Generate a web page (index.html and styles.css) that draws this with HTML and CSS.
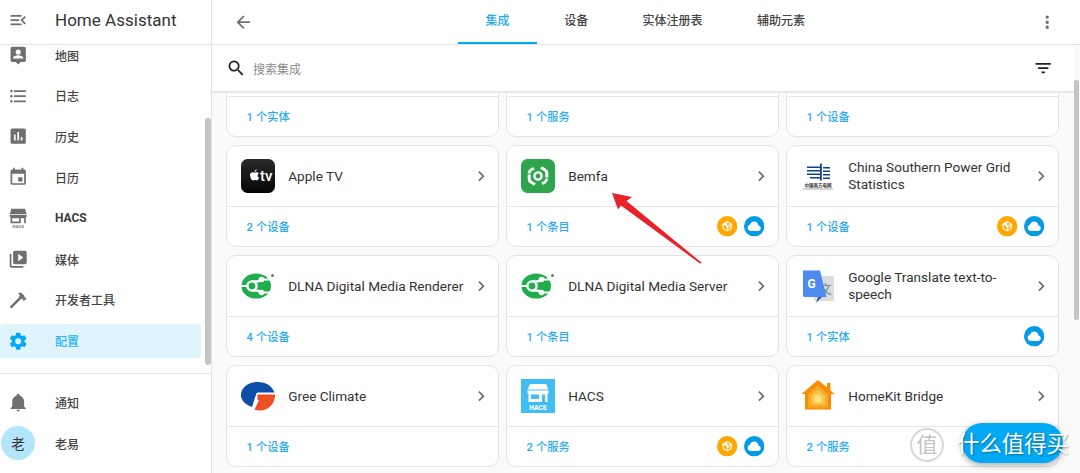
FILE: index.html
```html
<!DOCTYPE html>
<html lang="zh">
<head>
<meta charset="utf-8">
<title>Home Assistant</title>
<link rel="stylesheet" href="styles.css">
</head>
<body>
<svg class="defs" aria-hidden="true">
  <symbol id="chev" viewBox="0 0 24 24"><path d="M8.59,16.58L13.17,12L8.59,7.41L10,6L16,12L10,18L8.59,16.58Z"/></symbol>
  <symbol id="pkg" viewBox="0 0 24 24"><circle cx="12" cy="12" r="12" fill="#ffa600"/><g transform="translate(4.8 4.8) scale(.6)"><path fill="#fff" d="M2,10.96C1.5,10.68 1.35,10.07 1.63,9.59L3.13,7C3.24,6.8 3.41,6.66 3.6,6.58L11.43,2.18C11.59,2.06 11.79,2 12,2C12.21,2 12.41,2.06 12.57,2.18L20.47,6.62C20.66,6.72 20.82,6.88 20.91,7.08L22.36,9.6C22.64,10.08 22.47,10.69 22,10.96L21,11.54V16.5C21,16.88 20.79,17.21 20.47,17.38L12.57,21.82C12.41,21.94 12.21,22 12,22C11.79,22 11.59,21.94 11.43,21.82L3.53,17.38C3.21,17.21 3,16.88 3,16.5V10.96C2.7,11.13 2.32,11.14 2,10.96M12,4.15V4.15L12,10.85V10.85L17.96,7.5L12,4.15M5,15.91L11,19.29V12.58L5,9.21V15.91M19,15.91V12.69L14,15.59C13.67,15.77 13.3,15.76 13,15.6V19.29L19,15.91M13.85,13.36L20.13,9.73L19.55,8.72L13.27,12.35L13.85,13.36Z"/></g></symbol>
  <symbol id="cloud" viewBox="0 0 24 24"><circle cx="12" cy="12" r="12" fill="#039be5"/><g transform="translate(3.6 3.6) scale(.7)"><path fill="#fff" d="M6.5 20Q4.22 20 2.61 18.43 1 16.85 1 14.58 1 12.63 2.17 11.1 3.35 9.57 5.25 9.15 5.88 6.85 7.75 5.43 9.63 4 12 4 14.93 4 16.96 6.04 19 8.07 19 11 20.73 11.2 21.86 12.5 23 13.78 23 15.5 23 17.38 21.69 18.69 20.38 20 18.5 20Z"/></g></symbol>
  <symbol id="dlna" viewBox="0 0 34 34"><ellipse cx="15.2" cy="17" rx="14.8" ry="12.6" fill="#1fae4b"/><circle cx="11" cy="17" r="4.600" fill="none" stroke="#fff" stroke-width="2.400"/><path d="M11 12.400H18M11 21.600H18M20 10.500H30M20 23.500H30M0 17H6" stroke="#fff" stroke-width="2.200" fill="none"/><path d="M17 12.400L20 10.500M17 21.600L20 23.500" stroke="#fff" stroke-width="2.200"/><circle cx="20.500" cy="10.500" r="2.800" fill="#fff"/><circle cx="20.500" cy="23.500" r="2.800" fill="#fff"/><circle cx="31.500" cy="6.500" r="1.500" fill="#777"/></symbol>
</svg>

<div class="app">
  <aside class="sidebar">
    <header class="side-head">
      <svg class="ico" viewBox="0 0 24 24"><path d="M21,15.61L19.59,17L14.58,12L19.59,7L21,8.39L17.44,12L21,15.61M3,6H16V8H3V6M3,13V11H13V13H3M3,18V16H16V18H3Z"/></svg>
      <span class="brand">Home Assistant</span>
    </header>
    <div class="side-clip">
      <nav class="nav">
        <a class="item"><svg class="ico" viewBox="0 0 24 24"><path d="M19 2H5a2 2 0 0 0-2 2v14a2 2 0 0 0 2 2h4l3 3 3-3h4a2 2 0 0 0 2-2V4a2 2 0 0 0-2-2m-7 3.3a3 3 0 1 1 0 6 3 3 0 0 1 0-6M18 16H6v-.9c0-2 4-3.1 6-3.1s6 1.1 6 3.1z"/></svg><span>地图</span></a>
        <a class="item"><svg class="ico" viewBox="0 0 24 24"><path d="M7,5H21V7H7V5M7,13V11H21V13H7M4,4.5A1.5,1.5 0 0,1 5.5,6A1.5,1.5 0 0,1 4,7.5A1.5,1.5 0 0,1 2.5,6A1.5,1.5 0 0,1 4,4.5M4,10.5A1.5,1.5 0 0,1 5.5,12A1.5,1.5 0 0,1 4,13.5A1.5,1.5 0 0,1 2.5,12A1.5,1.5 0 0,1 4,10.5M7,19V17H21V19H7M4,16.5A1.5,1.5 0 0,1 5.5,18A1.5,1.5 0 0,1 4,19.5A1.5,1.5 0 0,1 2.5,18A1.5,1.5 0 0,1 4,16.5Z"/></svg><span>日志</span></a>
        <a class="item"><svg class="ico" viewBox="0 0 24 24"><path d="M9 17H7V10H9V17M13 17H11V7H13V17M17 17H15V13H17V17M19 3H5C3.9 3 3 3.9 3 5V19C3 20.1 3.9 21 5 21H19C20.1 21 21 20.1 21 19V5C21 3.9 20.1 3 19 3Z"/></svg><span>历史</span></a>
        <a class="item"><svg class="ico" viewBox="0 0 24 24"><path d="M19,19H5V8H19M16,1V3H8V1H6V3H5C3.89,3 3,3.89 3,5V19A2,2 0 0,0 5,21H19A2,2 0 0,0 21,19V5C21,3.89 20.1,3 19,3H18V1M17,12H12V17H17V12Z"/></svg><span>日历</span></a>
        <a class="item"><svg class="ico" viewBox="0 0 24 24"><path d="M4 1h16l2 6H2zM2 8h20v2l-1 1v7H3v-7l-1-1zM5 12v4h8v-4zM15 12v6h4v-6z"/><text class="hacs-mini" x="12" y="23.500" text-anchor="middle">HACS</text></svg><strong>HACS</strong></a>
        <a class="item"><svg class="ico" viewBox="0 0 24 24"><path d="M4,6H2V20A2,2 0 0,0 4,22H18V20H4V6M20,2H8A2,2 0 0,0 6,4V16A2,2 0 0,0 8,18H20A2,2 0 0,0 22,16V4A2,2 0 0,0 20,2M12,14.5V5.5L18,10L12,14.5Z"/></svg><span>媒体</span></a>
        <a class="item"><svg class="ico" viewBox="0 0 24 24"><path d="M2 19.63L13.43 8.2L12.72 7.5L14.14 6.07L12 3.89C13.2 2.7 15.09 2.7 16.27 3.89L19.87 7.5L18.45 8.91H21.29L22 9.62L18.45 13.21L17.74 12.5V9.62L16.27 11.04L15.56 10.33L4.13 21.76L2 19.63Z"/></svg><span>开发者工具</span></a>
        <a class="item active"><svg class="ico" viewBox="0 0 24 24"><path d="M12,15.5A3.5,3.5 0 0,1 8.5,12A3.5,3.5 0 0,1 12,8.5A3.5,3.5 0 0,1 15.5,12A3.5,3.5 0 0,1 12,15.5M19.43,12.97C19.47,12.65 19.5,12.33 19.5,12C19.5,11.67 19.47,11.34 19.43,11L21.54,9.37C21.73,9.22 21.78,8.95 21.66,8.73L19.66,5.27C19.54,5.05 19.27,4.96 19.05,5.05L16.56,6.05C16.04,5.66 15.5,5.32 14.87,5.07L14.5,2.42C14.46,2.18 14.25,2 14,2H10C9.75,2 9.54,2.18 9.5,2.42L9.13,5.07C8.5,5.32 7.96,5.66 7.44,6.05L4.95,5.05C4.73,4.96 4.46,5.05 4.34,5.27L2.34,8.73C2.21,8.95 2.27,9.22 2.46,9.37L4.57,11C4.53,11.34 4.5,11.67 4.5,12C4.5,12.33 4.53,12.65 4.57,12.97L2.46,14.63C2.27,14.78 2.21,15.05 2.34,15.27L4.34,18.73C4.46,18.95 4.73,19.03 4.95,18.95L7.44,17.94C7.96,18.34 8.5,18.68 9.13,18.93L9.5,21.58C9.54,21.82 9.75,22 10,22H14C14.25,22 14.46,21.82 14.5,21.58L14.87,18.93C15.5,18.67 16.04,18.34 16.56,17.94L19.05,18.95C19.27,19.03 19.54,18.95 19.66,18.73L21.66,15.27C21.78,15.05 21.73,14.78 21.54,14.63L19.43,12.97Z"/></svg><span>配置</span></a>
      </nav>
      <div class="side-bar"></div>
    </div>
    <div class="side-foot">
      <a class="item"><svg class="ico" viewBox="0 0 24 24"><path d="M21,19V20H3V19L5,17V11C5,7.9 7.03,5.17 10,4.29C10,4.19 10,4.1 10,4A2,2 0 0,1 12,2A2,2 0 0,1 14,4C14,4.1 14,4.19 14,4.29C16.97,5.17 19,7.9 19,11V17L21,19M14,21A2,2 0 0,1 12,23A2,2 0 0,1 10,21"/></svg><span>通知</span></a>
      <a class="item user"><span class="avatar">老</span><span>老易</span></a>
    </div>
  </aside>

  <main class="main">
    <header class="topbar">
      <svg class="ico back" viewBox="0 0 24 24"><path d="M20,11V13H8L13.5,18.5L12.08,19.92L4.16,12L12.08,4.08L13.5,5.5L8,11H20Z"/></svg>
      <div class="tabs">
        <a class="tab on">集成</a><a class="tab">设备</a><a class="tab">实体注册表</a><a class="tab">辅助元素</a>
      </div>
      <svg class="ico dots" viewBox="0 0 24 24"><path d="M12,16A2,2 0 0,1 14,18A2,2 0 0,1 12,20A2,2 0 0,1 10,18A2,2 0 0,1 12,16M12,10A2,2 0 0,1 14,12A2,2 0 0,1 12,14A2,2 0 0,1 10,12A2,2 0 0,1 12,10M12,4A2,2 0 0,1 14,6A2,2 0 0,1 12,8A2,2 0 0,1 10,6A2,2 0 0,1 12,4Z"/></svg>
    </header>
    <div class="searchbar">
      <svg class="ico search" viewBox="0 0 24 24"><path d="M9.5,3A6.5,6.5 0 0,1 16,9.5C16,11.11 15.41,12.59 14.44,13.73L14.71,14H15.5L20.5,19L19,20.5L14,15.5V14.71L13.73,14.44C12.59,15.41 11.11,16 9.5,16A6.5,6.5 0 0,1 3,9.5A6.5,6.5 0 0,1 9.5,3M9.5,5C7,5 5,7 5,9.5C5,12 7,14 9.5,14C12,14 14,12 14,9.5C14,7 12,5 9.5,5Z"/></svg>
      <span class="placeholder">搜索集成</span>
      <svg class="ico filter" viewBox="0 0 24 24"><path d="M6,13H18V11H6M3,6V8H21V6M10,18H14V16H10V18Z"/></svg>
    </div>
    <div class="content">
      <div class="grid">
        <article class="card"><div class="head"></div><div class="foot"><a class="link">1 个实体</a></div></article>
        <article class="card"><div class="head"></div><div class="foot"><a class="link">1 个服务</a></div></article>
        <article class="card"><div class="head"></div><div class="foot"><a class="link">1 个设备</a></div></article>

        <article class="card"><div class="head">
          <svg class="logo" viewBox="0 0 34 34"><defs><linearGradient id="tvg" x1="0" y1="0" x2="0" y2="1"><stop offset="0" stop-color="#2a2a2a"/><stop offset="1" stop-color="#050505"/></linearGradient></defs><rect width="34" height="34" rx="6.500" fill="url(#tvg)"/><path fill="#fff" d="M11.800 13.200c.7-.1 1.500.4 2 .4s1.300-.5 2.100-.4c.8 0 1.600.4 2 1.100-1.800 1.100-1.500 3.600.3 4.300-.4 1.200-1.300 2.900-2.300 2.900-.7 0-1-.4-1.900-.4s-1.300.4-2 .4c-1.300 0-3-3-3-5.200 0-2.100 1.300-3.100 2.800-3.100zM15.700 10.500c0 1.300-1.100 2.400-2.200 2.300 0-1.300 1.100-2.300 2.200-2.300z"/><text class="tv-text" x="19" y="22">tv</text></svg>
          <span class="name">Apple TV</span><svg class="chev"><use href="#chev"/></svg></div>
          <div class="foot"><a class="link">2 个设备</a></div></article>

        <article class="card"><div class="head">
          <svg class="logo" viewBox="0 0 34 34"><rect width="34" height="34" rx="6.500" fill="#2ea44f"/><circle cx="17" cy="17" r="3.600" fill="none" stroke="#fff" stroke-width="2.400"/><path d="M20 8.500l3.800 2.200q2 1.200 2 3.500v4.300M14 25.500l-3.800-2.200q-2-1.200-2-3.500v-4.300" fill="none" stroke="#fff" stroke-width="3"/><path d="M8.200 14.500q0-2.500 2-3.700l2.800-1.600M25.800 19.500q0 2.500-2 3.700l-2.800 1.600" fill="none" stroke="#fff" stroke-width="3" stroke-opacity=".85"/></svg>
          <span class="name">Bemfa</span><svg class="chev"><use href="#chev"/></svg></div>
          <div class="foot"><a class="link">1 个条目</a><svg class="badge"><use href="#pkg"/></svg><svg class="badge"><use href="#cloud"/></svg></div></article>

        <article class="card"><div class="head">
          <svg class="logo" viewBox="0 0 34 34"><path fill="#11408f" d="M6 7.500h13v1.500H6zM6 11h13v1.500H6zM6 14.500h13v1.500H6zM9 18h10v1.500H9zM19 4.500h1.800v17H19zM22 8h7v1.500h-7zM22 11.500h7V13h-7zM22 15h7v1.500h-7zM22 18.500h7V20h-7z"/><text class="csg-text" x="17" y="28" text-anchor="middle">中国南方电网</text><rect x="2" y="29.500" width="30" height="1" fill="#aaa"/></svg>
          <span class="name">China Southern Power Grid Statistics</span><svg class="chev"><use href="#chev"/></svg></div>
          <div class="foot"><a class="link">1 个设备</a><svg class="badge"><use href="#pkg"/></svg><svg class="badge"><use href="#cloud"/></svg></div></article>

        <article class="card"><div class="head">
          <svg class="logo"><use href="#dlna"/></svg>
          <span class="name">DLNA Digital Media Renderer</span><svg class="chev"><use href="#chev"/></svg></div>
          <div class="foot"><a class="link">4 个设备</a></div></article>

        <article class="card"><div class="head">
          <svg class="logo"><use href="#dlna"/></svg>
          <span class="name">DLNA Digital Media Server</span><svg class="chev"><use href="#chev"/></svg></div>
          <div class="foot"><a class="link">1 个条目</a></div></article>

        <article class="card"><div class="head">
          <svg class="logo" viewBox="0 0 34 34"><rect x="13" y="7" width="20" height="25" rx="1.500" fill="#dcdcdc"/><text class="gt-zh" x="24.500" y="25" text-anchor="middle">文</text><path fill="#3f51b5" d="M17 28l-2 6 6-6z"/><path fill="#4d8bf0" d="M2 1.500h17l6.500 26.500H3.500q-1.500 0-1.500-1.500z"/><text class="gt-g" x="10.500" y="19" text-anchor="middle">G</text></svg>
          <span class="name">Google Translate text-to-speech</span><svg class="chev"><use href="#chev"/></svg></div>
          <div class="foot"><a class="link">1 个实体</a><svg class="badge"><use href="#cloud"/></svg></div></article>

        <article class="card"><div class="head">
          <svg class="logo" viewBox="0 0 34 34"><path fill="#0d4ea6" d="M11 28C4 25.500 0 21 0 16.500 0 8 8 3 17 3c8 0 14 4 16.500 10.500H17.500c-1.500 0-2 .5-2.500 2z"/><path fill="#ef5023" d="M16.500 15.500H34C34.500 25 27 31.500 19 31.500c-2 0-4-.3-5.500-.7L18 21h-1.500z"/></svg>
          <span class="name">Gree Climate</span><svg class="chev"><use href="#chev"/></svg></div>
          <div class="foot"><a class="link">1 个设备</a></div></article>

        <article class="card"><div class="head">
          <svg class="logo" viewBox="0 0 34 34"><rect width="34" height="34" fill="#41bdf5"/><path fill="#fff" d="M9 5h16l2.500 5.500h-21zM6.500 11.500h21v2.500l-1 .8V23h-19v-8.200l-1-.8zM10 15.500V20h8v-4.500zM21 15.500V23h3v-7.500z"/><text class="hacs-logo" x="17" y="30.500" text-anchor="middle">HACS</text></svg>
          <span class="name">HACS</span><svg class="chev"><use href="#chev"/></svg></div>
          <div class="foot"><a class="link">2 个服务</a><svg class="badge"><use href="#pkg"/></svg><svg class="badge"><use href="#cloud"/></svg></div></article>

        <article class="card"><div class="head">
          <svg class="logo" viewBox="0 0 34 34"><path fill="#fb8c00" d="M17 1l9 7.500V4h3.500v7.500L33.500 15H30v15.500H4V15H.5z"/><path fill="#fba92b" d="M17 6l10 9v13.500H7V15z"/><path fill="#fdc548" d="M17 10.500l7 6.300v9H10v-9z"/><path fill="#fde082" d="M17 15l3.800 3.400v4.800h-7.600v-4.800z"/></svg>
          <span class="name">HomeKit Bridge</span><svg class="chev"><use href="#chev"/></svg></div>
          <div class="foot"><a class="link">2 个服务</a></div></article>
      </div>
    </div>
    <div class="main-bar"></div>
  </main>
</div>

<svg class="arrow" viewBox="0 0 100 80"><polygon fill="#e8212b" points="2,3 22,7 16.500,11 92,73 90,73.500 11,15.500 8,19.500"/></svg>

<div class="wm">
  <span class="wm-logo">值</span>
  <span class="wm-pill">什么值得买</span>
</div>
</body>
</html>
```
FILE: styles.css
```css
* { box-sizing: border-box; }
html, body { margin: 0; height: 100%; overflow: hidden; }
body {
  font-family: Roboto, "Noto Sans CJK SC", sans-serif;
  color: #333;
  background: #fafafa;
  position: relative;
}
a { display: block; }
.defs { position: absolute; width: 0; height: 0; }
.ico { width: 20.4px; height: 20.4px; fill: #6f6f6f; flex: none; display: block; }

.app { display: flex; height: 473px; }

/* sidebar */
.sidebar {
  width: 212px; flex: none; height: 100%;
  background: #fff; border-right: 1px solid #e3e3e3;
  display: flex; flex-direction: column;
}
.side-head {
  height: 45px; flex: none;
  display: flex; align-items: center;
  padding: 0 0 4px 8px;
  border-bottom: 1px solid #e3e3e3;
}
.brand { margin-left: 26.600px; font-size: 17px; color: #333; letter-spacing: .02px; }
.side-clip { height: 328.500px; flex: none; overflow: hidden; border-bottom: 1px solid #e6e6e6; position: relative; }
.nav { margin-top: -10.400px; }
.item {
  height: 40.820px; width: 201px;
  display: flex; align-items: center;
  padding-left: 8px;
  font-size: 12px; font-weight: 500; color: #444;
}
.item span:last-child, .item strong { margin-left: 26.600px; }
.item strong { font-weight: 700; color: #3c3c3c; }
.item .hacs-mini { font: 700 5px Roboto, sans-serif; }
.item.active { position: relative; color: #29b6f6; }
.item.active::before {
  content: ""; position: absolute; left: 0; right: 0; top: 3.400px; bottom: 3.400px;
  background: #e0f4fe; border-radius: 3.400px;
}
.item.active > * { position: relative; }
.item.active .ico { fill: #03a9f4; }
.side-bar {
  position: absolute; right: 0; top: 73px; width: 6px; height: 247px;
  background: #c4c4c4; border-radius: 3px;
}
.side-foot { padding-top: 8.500px; }
.side-foot .item { height: 40.820px; }
.item.user { padding-left: 1px; }
.avatar {
  width: 34px; height: 34px; border-radius: 50%;
  background: #b3e5fc; color: #333; font-size: 13.600px; font-weight: 400;
  display: flex; align-items: center; justify-content: center; flex: none;
}
.item.user span:last-child { margin-left: 20px; }

/* main */
.main { flex: 1; min-width: 0; display: flex; flex-direction: column; height: 100%; position: relative; }
.topbar {
  height: 45px; flex: none; background: #fff;
  display: flex; align-items: center;
  border-bottom: 1px solid #e3e3e3;
}
.back { margin-left: 20.800px; }
.tabs { display: flex; height: 44px; margin-left: 204.800px; }
.tab {
  padding: 0 27.200px; height: 44px; line-height: 42px;
  font-size: 12px; font-weight: 500; color: #444;
}
.tab.on { color: #29abf0; border-bottom: 2px solid #03a9f4; padding: 0 27.500px; }
.dots { margin-left: auto; margin-right: 22.800px; }

.searchbar {
  height: 48px; flex: none; background: #fff;
  margin-right: 6px;
  display: flex; align-items: center;
  border-bottom: 2px solid #e8e8e8;
}
.search { margin-left: 13.800px; fill: #1f1f1f; }
.placeholder { margin-left: 6.800px; font-size: 12px; color: #8a8a8a; }
.filter { margin-left: auto; margin-right: 20.800px; fill: #222; }

.content { flex: 1; min-height: 0; overflow: hidden; }
.grid {
  margin-top: -58px; padding-left: 14px;
  display: grid; grid-template-columns: repeat(3, 273px); gap: 8px 7px;
}
.main-bar {
  position: absolute; right: 1px; top: 80px; width: 5px; height: 240px;
  background: #c4c4c4; border-radius: 3px;
}
.card {
  height: 102px; background: #fff;
  border: 1px solid #e3e3e3; border-radius: 10.200px;
  display: flex; flex-direction: column;
}
.head {
  height: 61px; flex: none;
  display: flex; align-items: center;
  padding: 0 7px 0 13.600px;
  border-bottom: 1px solid #e6e6e6;
}
.logo { width: 34px; height: 34px; flex: none; display: block; }
.name { margin-left: 13.600px; flex: 1; font-size: 13.600px; line-height: 17px; color: #333; min-width: 0; }
.chev { width: 20.400px; height: 20.400px; fill: #6f6f6f; flex: none; }
.foot {
  flex: 1; display: flex; align-items: center;
  padding: 0 13.500px 0 19.600px; gap: 6.600px;
}
.link { font-size: 11.200px; font-weight: 500; color: #29abf0; letter-spacing: .1px; margin: 0 auto 2px 0; }
.badge { width: 20.400px; height: 20.400px; flex: none; }

.tv-text { font: 500 15px Roboto, sans-serif; fill: #fff; }
.csg-text { font: 700 4.500px "Noto Sans CJK SC", sans-serif; fill: #333; }
.gt-zh { font: 400 12px "Noto Sans CJK SC", sans-serif; fill: #607d8b; }
.gt-g { font: 700 12px Roboto, sans-serif; fill: #fff; }
.hacs-logo { font: 900 6.500px Roboto, sans-serif; fill: #fff; }

/* overlays: annotation arrow and watermark */
.arrow { position: absolute; left: 610px; top: 190px; width: 100px; height: 80px; }
.wm { position: absolute; left: 910px; top: 423px; width: 170px; height: 40px; }
.wm-logo {
  position: absolute; left: 0; top: 5px; width: 34px; height: 34px;
  border: 2px solid rgba(190,190,190,.6); border-radius: 50%;
  color: #c4c4c4; font-size: 21px; line-height: 30px; text-align: center;
  text-shadow: 0 0 2px #fff;
}
.wm-pill {
  position: absolute; left: 52px; top: 0; width: 101px; height: 40px;
  background: #03a9f4; border-radius: 20px;
  box-shadow: 0 2px 6px rgba(0,0,0,.35);
  color: #fff; font-size: 22.400px; line-height: 42px; white-space: nowrap;
  text-shadow: 1px 1px 2px rgba(0,0,0,.35);
  text-indent: -5px;
}
```
